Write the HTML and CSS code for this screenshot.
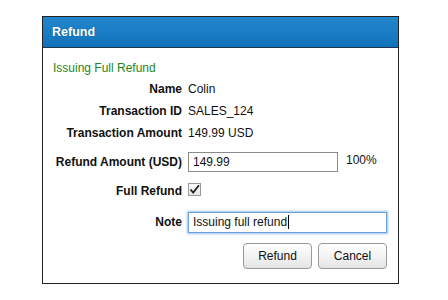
FILE: index.html
```html
<!DOCTYPE html>
<html lang="en">
<head>
    <meta charset="UTF-8">
    <title>Refund</title>
    <link rel="stylesheet" href="styles.css">
</head>
<body>
    <div class="dialog">
        <div class="dialog-header">Refund</div>
        <div class="dialog-body">
            <div class="status">Issuing Full Refund</div>

            <div class="row">
                <span class="label">Name</span>
                <span class="value">Colin</span>
            </div>
            <div class="row">
                <span class="label">Transaction ID</span>
                <span class="value">SALES_124</span>
            </div>
            <div class="row">
                <span class="label">Transaction Amount</span>
                <span class="value">149.99 USD</span>
            </div>
            <div class="row row-amount">
                <span class="label">Refund Amount (USD)</span>
                <div class="field field-amount">149.99</div>
                <span class="percent">100%</span>
            </div>
            <div class="row row-check">
                <span class="label">Full Refund</span>
                <span class="checkbox">
                    <svg width="11" height="11" viewBox="0 0 11 11">
                        <path d="M1.5 5.5 L4.2 8.6 L10 1.2" fill="none" stroke="#222" stroke-width="1.8"/>
                    </svg>
                </span>
            </div>
            <div class="row row-note">
                <span class="label">Note</span>
                <div class="field field-note">Issuing full refund<span class="caret"></span></div>
            </div>

            <div class="actions">
                <button class="btn">Refund</button>
                <button class="btn">Cancel</button>
            </div>
        </div>
    </div>
</body>
</html>
```

FILE: styles.css
```css
body {
    margin: 0;
    font-family: "Liberation Sans", Arial, sans-serif;
    font-size: 12px;
    color: #111;
    background-color: #fff;
}
.dialog {
    box-sizing: border-box;
    width: 357px;
    height: 268px;
    margin: 16px 0 0 42px;
    border: 1px solid #222;
}
.dialog-header {
    height: 30px;
    line-height: 30px;
    padding-left: 9px;
    border-bottom: 1px solid #1c3550;
    background: linear-gradient(#2286cb, #1a7dc4 50%, #0f71ba);
    color: #fff;
    font-weight: bold;
    font-size: 12.5px;
    text-shadow: 0 0 1px rgba(0,0,0,0.3);
}
.dialog-body {
    padding: 13px 11px 0 10px;
}
.status {
    color: #23871c;
    line-height: 14px;
    margin-bottom: 3px;
}
.row {
    display: flex;
    align-items: center;
    height: 22px;
}
.label {
    width: 129px;
    margin-right: 6px;
    text-align: right;
    font-weight: bold;
    flex-shrink: 0;
}
.row-amount {
    margin-top: 6px;
    height: 24px;
}
.row-check {
    margin-top: 6px;
}
.row-note {
    margin-top: 8px;
    height: 24px;
}
.field {
    box-sizing: border-box;
    height: 20px;
    line-height: 18px;
    padding: 0 4px;
    border: 1px solid #8a8a8a;
    background-color: #fff;
}
.field-amount {
    width: 150px;
}
.percent {
    margin-left: 8px;
    margin-top: -4px;
}
.field-note {
    flex: 1;
    height: 21px;
    line-height: 19px;
    border-color: #6e9fd6;
    box-shadow: 0 0 2px 1px #9cc3ee;
}
.caret {
    display: inline-block;
    width: 1px;
    height: 14px;
    margin-left: 1px;
    vertical-align: -3px;
    background-color: #000;
}
.checkbox {
    box-sizing: border-box;
    width: 13px;
    height: 13px;
    margin-top: -4px;
    border: 1px solid #9a9a9a;
    background: linear-gradient(#fdfdfd, #e6e6e6);
    display: flex;
    align-items: center;
    justify-content: center;
}
.actions {
    display: flex;
    justify-content: flex-end;
    gap: 6px;
    margin-top: 9px;
}
.btn {
    width: 69px;
    height: 26px;
    padding: 0;
    border: 1px solid #9a9a9a;
    border-radius: 4px;
    background: linear-gradient(#ffffff, #f3f3f3 50%, #e4e4e4);
    font-family: "Liberation Sans", Arial, sans-serif;
    font-size: 12px;
    color: #111;
}
```
